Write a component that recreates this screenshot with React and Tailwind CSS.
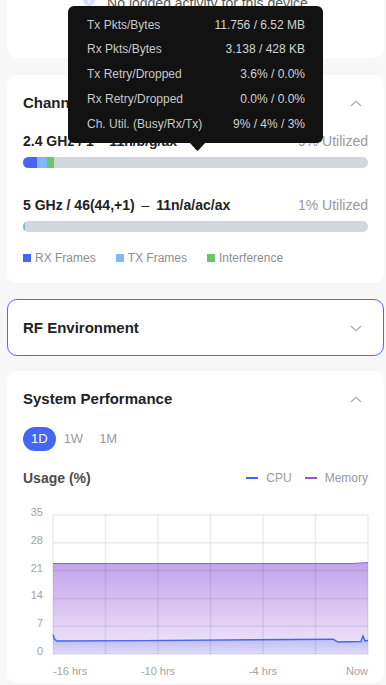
import React from "react";

const font = "font-['Liberation_Sans',Arial,sans-serif]";

function ChevronUp() {
  return (
    <svg width="12" height="7" viewBox="0 0 12 7" fill="none">
      <path d="M1 6 L6 1.2 L11 6" stroke="#a6a6a6" strokeWidth="1.1" />
    </svg>
  );
}

function ChevronDown() {
  return (
    <svg width="12" height="7" viewBox="0 0 12 7" fill="none">
      <path d="M1 1 L6 5.8 L11 1" stroke="#a6a6a6" strokeWidth="1.1" />
    </svg>
  );
}

function Tooltip() {
  const rows = [
    ["Tx Pkts/Bytes", "11.756 / 6.52 MB"],
    ["Rx Pkts/Bytes", "3.138 / 428 KB"],
    ["Tx Retry/Dropped", "3.6% / 0.0%"],
    ["Rx Retry/Dropped", "0.0% / 0.0%"],
    ["Ch. Util. (Busy/Rx/Tx)", "9% / 4% / 3%"],
  ];
  return (
    <div className="absolute left-[68px] top-[6px] w-[255px] rounded-[6px] bg-[#121212] pl-[19px] pr-[18px] pt-[6.5px] pb-[6.75px] text-[12px] leading-[24.75px]">
      {rows.map(([k, v]) => (
        <div key={k} className="flex justify-between">
          <span className="text-[#c9c9c9]">{k}</span>
          <span className="text-[#d2d2d2]">{v}</span>
        </div>
      ))}
      <svg
        className="absolute left-[122px] top-full"
        width="15"
        height="8"
        viewBox="0 0 15 8"
      >
        <path d="M0 0 L15 0 L8.5 7.3 Q7.5 8 6.5 7.3 Z" fill="#121212" />
      </svg>
    </div>
  );
}

function Band({ label, util, segments, className }) {
  return (
    <div className={className}>
      <div className="flex h-5 items-center justify-between text-[14px]">
        <span className="font-bold text-[#222]">{label}</span>
        <span className="text-[#9a9a9a]">{util}</span>
      </div>
      <div className="mt-[6px] flex h-[11px] overflow-hidden rounded-full bg-[#d3d6df]">
        {segments}
      </div>
    </div>
  );
}

function Chart() {
  const L = 30;
  const R = 345;
  const T = 29;
  const B = 168;
  const yOf = (v) => B - (v / 35) * (B - T);
  const ys = [35, 28, 21, 14, 7, 0];
  const xs = [0, 1, 2, 3, 4, 5, 6].map((i) => L + i * 52.5);
  const mem = "M30 77.5 L330 77.5 L345 76.5";
  const cpuPts = [
    [30, 148.5],
    [31.5, 153],
    [34, 155],
    [120, 154.6],
    [310, 153.2],
    [315, 156],
    [338, 155.5],
    [340, 150],
    [342, 155],
    [345, 154.5],
  ];
  const cpu = cpuPts.map((p, i) => (i ? "L" : "M") + p[0] + " " + p[1]).join(" ");
  return (
    <svg width="347" height="197" viewBox="0 0 347 197" className="-mt-[2px] block">
      <defs>
        <linearGradient id="memFill" x1="0" y1="0" x2="0" y2="1">
          <stop offset="0" stopColor="#c3a2ea" />
          <stop offset="1" stopColor="#f1e9fb" />
        </linearGradient>
        <linearGradient id="cpuFill" x1="0" y1="0" x2="0" y2="1">
          <stop offset="0" stopColor="#5874f0" stopOpacity="0.35" />
          <stop offset="1" stopColor="#5874f0" stopOpacity="0.12" />
        </linearGradient>
      </defs>
      <path d={mem + ` L${R} ${B} L${L} ${B} Z`} fill="url(#memFill)" />
      <path d={cpu + ` L${R} ${B} L${L} ${B} Z`} fill="url(#cpuFill)" />
      {ys.map((v) => (
        <line
          key={"h" + v}
          x1={L}
          x2={R}
          y1={yOf(v)}
          y2={yOf(v)}
          stroke="rgba(70,70,110,0.1)"
          strokeWidth="1.5"
        />
      ))}
      {xs.map((x) => (
        <line
          key={"v" + x}
          x1={x}
          x2={x}
          y1={T}
          y2={B}
          stroke="rgba(70,70,110,0.1)"
          strokeWidth="1.5"
        />
      ))}
      <path d={mem} fill="none" stroke="#9a5fd6" strokeWidth="1.2" />
      <path d={cpu} fill="none" stroke="#4466ee" strokeWidth="1.4" />
      {ys.map((v) => (
        <text
          key={"t" + v}
          x="20"
          y={yOf(v) - 3}
          textAnchor="end"
          dominantBaseline="central"
          fontSize="11"
          fill="#a3a3a3"
        >
          {v}
        </text>
      ))}
      <text x="30" y="185" dominantBaseline="central" fontSize="11" fill="#a3a3a3">
        -16 hrs
      </text>
      <text x="135" y="185" textAnchor="middle" dominantBaseline="central" fontSize="11" fill="#a3a3a3">
        -10 hrs
      </text>
      <text x="240" y="185" textAnchor="middle" dominantBaseline="central" fontSize="11" fill="#a3a3a3">
        -4 hrs
      </text>
      <text x="345" y="185" textAnchor="end" dominantBaseline="central" fontSize="11" fill="#a3a3a3">
        Now
      </text>
    </svg>
  );
}

export default function App() {
  return (
    <div className={`relative h-[685px] overflow-hidden bg-[#f7f7f8] pl-[7px] pr-[2px] ${font}`}>
      <div className="rounded-b-[10px] bg-white pb-[45px]">
        <div className="-mt-[7px] flex items-start justify-center gap-3 text-[14px] leading-5">
          <span className="mt-[1px] flex h-3 w-3 items-center justify-center rounded-full bg-[#d6e1fa] text-[9px] font-bold leading-none text-white">
            i
          </span>
          <span className="text-[#555]">No logged activity for this device</span>
        </div>
      </div>

      <div className="mt-[17px] rounded-[10px] bg-white px-4 pt-[18px] pb-[17px]">
        <div className="flex h-5 items-center justify-between">
          <span className="text-[15px] font-bold text-[#222]">Channel Utilization</span>
          <span className="mr-[6px]">
            <ChevronUp />
          </span>
        </div>
        <Band
          className="mt-[18px]"
          label="2.4 GHz / 1  –  11n/b/g/ax"
          util="9% Utilized"
          segments={
            <>
              <div className="w-[14px] bg-[#4466f2]" />
              <div className="w-[10px] bg-[#7bbaf5]" />
              <div className="w-[7px] bg-[#6fc36f]" />
            </>
          }
        />
        <Band
          className="mt-[27px]"
          label={
            <>
              5 GHz / 46(44,+1) <span className="mx-[3px] font-normal">–</span> 11n/a/ac/ax
            </>
          }
          util="1% Utilized"
          segments={<div className="w-[2px] bg-[#7bbaf5]" />}
        />
        <div className="mt-[18px] flex items-center gap-[20px] text-[12px] leading-4 text-[#8e8e8e]">
          <div className="flex items-center gap-1">
            <span className="h-2 w-2 bg-[#4466f2]" />
            RX Frames
          </div>
          <div className="flex items-center gap-1">
            <span className="h-2 w-2 bg-[#7bbaf5]" />
            TX Frames
          </div>
          <div className="flex items-center gap-1">
            <span className="h-2 w-2 bg-[#6fc36f]" />
            Interference
          </div>
        </div>
      </div>

      <div className="mt-4 rounded-[10px] border border-[#4a6cf7] bg-white px-[15px] pt-[18px] pb-[17px]">
        <div className="flex h-5 items-center justify-between">
          <span className="text-[15px] font-bold text-[#222]">RF Environment</span>
          <span className="mr-[6px]">
            <ChevronDown />
          </span>
        </div>
      </div>

      <div className="mt-[15px] rounded-[10px] bg-white px-4 pt-[18px]">
        <div className="flex h-5 items-center justify-between">
          <span className="text-[15px] font-bold text-[#222]">System Performance</span>
          <span className="mr-[6px]">
            <ChevronUp />
          </span>
        </div>
        <div className="mt-[18px] flex text-[13px]">
          <button className="h-6 rounded-full bg-[#4466f2] px-2 text-white">1D</button>
          <button className="h-6 px-2 text-[#999]">1W</button>
          <button className="h-6 px-2 text-[#999]">1M</button>
        </div>
        <div className="mt-[17px] flex h-5 items-center justify-between">
          <span className="text-[14px] font-bold text-[#4d4d4d]">Usage (%)</span>
          <div className="flex items-center text-[12px] text-[#999]">
            <span className="h-[2px] w-3 bg-[#4466f2]" />
            <span className="ml-2">CPU</span>
            <span className="ml-[13px] h-[2px] w-3 bg-[#9a55d6]" />
            <span className="ml-2">Memory</span>
          </div>
        </div>
        <Chart />
      </div>

      <Tooltip />
    </div>
  );
}
